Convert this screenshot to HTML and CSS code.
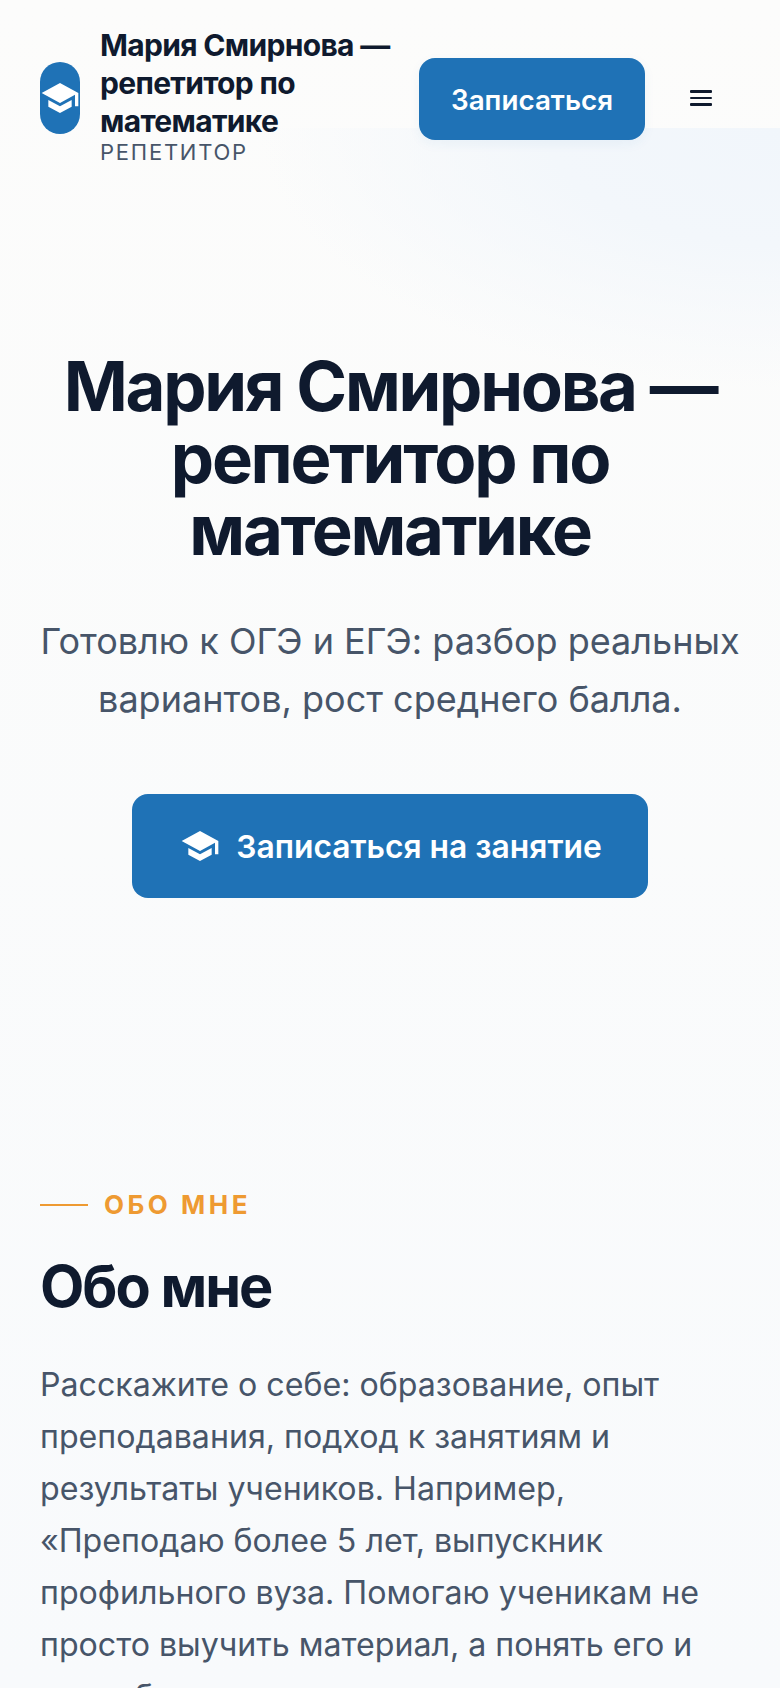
FILE: index.html
```html
<!DOCTYPE html>
<html lang="ru">
<head>
<meta charset="utf-8">
<title>Мария Смирнова — репетитор по математике</title>
<link rel="stylesheet" href="styles.css">
</head>
<body>
<div class="page">
<header class="header">
  <a class="brand">
    <span class="brand-icon">
      <svg viewBox="0 0 24 24" class="cap-logo"><path d="M12 3 1 9l11 6 9-4.9V17h2V9L12 3Z"/><path d="M5 13.2v4L12 21l7-3.8v-4L12 17l-7-3.8Z"/></svg>
    </span>
    <span class="brand-text">
      <span class="brand-title">Мария Смирнова — репетитор по математике</span>
      <span class="brand-sub">РЕПЕТИТОР</span>
    </span>
  </a>
  <a class="header-btn">Записаться</a>
  <button class="burger" aria-label="Меню"><span></span><span></span><span></span></button>
</header>
<section class="hero">
  <h1>Мария Смирнова — репетитор по математике</h1>
  <p class="lead">Готовлю к ОГЭ и ЕГЭ: разбор реальных вариантов, рост среднего балла.</p>
  <a class="cta">
    <svg viewBox="0 0 24 24" class="cap-cta"><path d="M12 3 1 9l11 6 9-4.9V17h2V9L12 3Z"/><path d="M5 13.2v4L12 21l7-3.8v-4L12 17l-7-3.8Z"/></svg>
    <span>Записаться на занятие</span>
  </a>
</section>
<section class="about">
  <div class="eyebrow">ОБО МНЕ</div>
  <h2>Обо мне</h2>
  <p class="about-text">Расскажите о себе: образование, опыт преподавания, подход к занятиям и результаты учеников. Например, «Преподаю более 5 лет, выпускник профильного вуза. Помогаю ученикам не просто выучить материал, а понять его и способность применять знания.</p>
</section>
</div>
</body>
</html>
```
FILE: styles.css
```css
* { box-sizing: border-box; }
html, body { margin: 0; height: 1688px; overflow: hidden; }
body { font-family: Inter, "Noto Sans", sans-serif; font-feature-settings: "calt" 0; background: #fafafa; color: #0f1a2e; }
.page { height: 1688px; overflow: hidden; background: radial-gradient(ellipse 520px 260px at 100% 0, #f1f6fb 0%, #f3f7fb 45%, rgba(246, 249, 251, 0) 100%) 0 128px / 100% 300px no-repeat, linear-gradient(180deg, #fcfcfb 0%, #f8fafc 100%); }
.header { display: flex; align-items: center; height: 196px; padding: 0 40px; gap: 20px; }
.brand { display: flex; align-items: center; gap: 20px; flex: none; margin-top: -2px; }
.brand-icon { width: 40px; height: 72px; flex: none; margin-top: 2px; border-radius: 20px; background: #1f72b6; display: flex; align-items: center; justify-content: center; }
.cap-logo { width: 40px; height: 40px; fill: #fff; flex: none; }
.brand-text { display: flex; flex-direction: column; width: 298px; flex: none; margin-top: -4px; }
.brand-title { font-size: 30px; line-height: 38px; font-weight: 700; letter-spacing: -0.68px; color: #0f1a2e; }
.brand-sub { font-size: 22px; line-height: 25px; letter-spacing: 0.08em; color: #475569; }
.header-btn { flex: none; width: 226px; height: 82px; margin-top: 2px; margin-left: 1px; padding-top: 2px; border-radius: 16px; background: #1f72b6; color: #fff; font-size: 27.8px; font-weight: 600; display: flex; align-items: center; justify-content: center; box-shadow: 0 4px 12px rgba(31, 114, 182, 0.06); }
.burger { flex: none; width: 40px; height: 40px; padding: 0; margin-left: 16px; background: none; border: 0; display: flex; flex-direction: column; align-items: center; justify-content: center; gap: 4px; }
.burger span { display: block; width: 22px; height: 2.5px; background: #0f1a2e; border-radius: 1px; }
.hero { height: 804px; padding: 154px 40px 0; text-align: center; }
h1 { margin: 0; font-size: 68.8px; line-height: 72px; font-weight: 700; letter-spacing: -0.033em; color: #0f1a2e; }
.lead { margin: 46px 0 0; font-size: 36px; line-height: 58px; color: #475569; }
.cta { margin: 66px auto 0; width: 516px; height: 104px; padding-left: 2px; border-radius: 16px; background: #1f72b6; color: #fff; font-size: 31.8px; font-weight: 600; display: flex; align-items: center; justify-content: center; gap: 16px; }
.cap-cta { width: 40px; height: 40px; fill: #fff; flex: none; }
.about { padding: 0 40px; }
.eyebrow { display: flex; align-items: center; gap: 16px; font-size: 26px; line-height: 32px; font-weight: 700; letter-spacing: 0.135em; color: #ee9a32; margin-top: 189px; }
.eyebrow::before { content: ""; width: 48px; height: 2px; background: #ee9a32; }
h2 { margin: 31px 0 0; font-size: 57.6px; line-height: 68px; font-weight: 700; letter-spacing: -0.035em; color: #0f1a2e; }
.about-text { margin: 39px 0 0; font-size: 32.15px; line-height: 52px; color: #475569; }
```
